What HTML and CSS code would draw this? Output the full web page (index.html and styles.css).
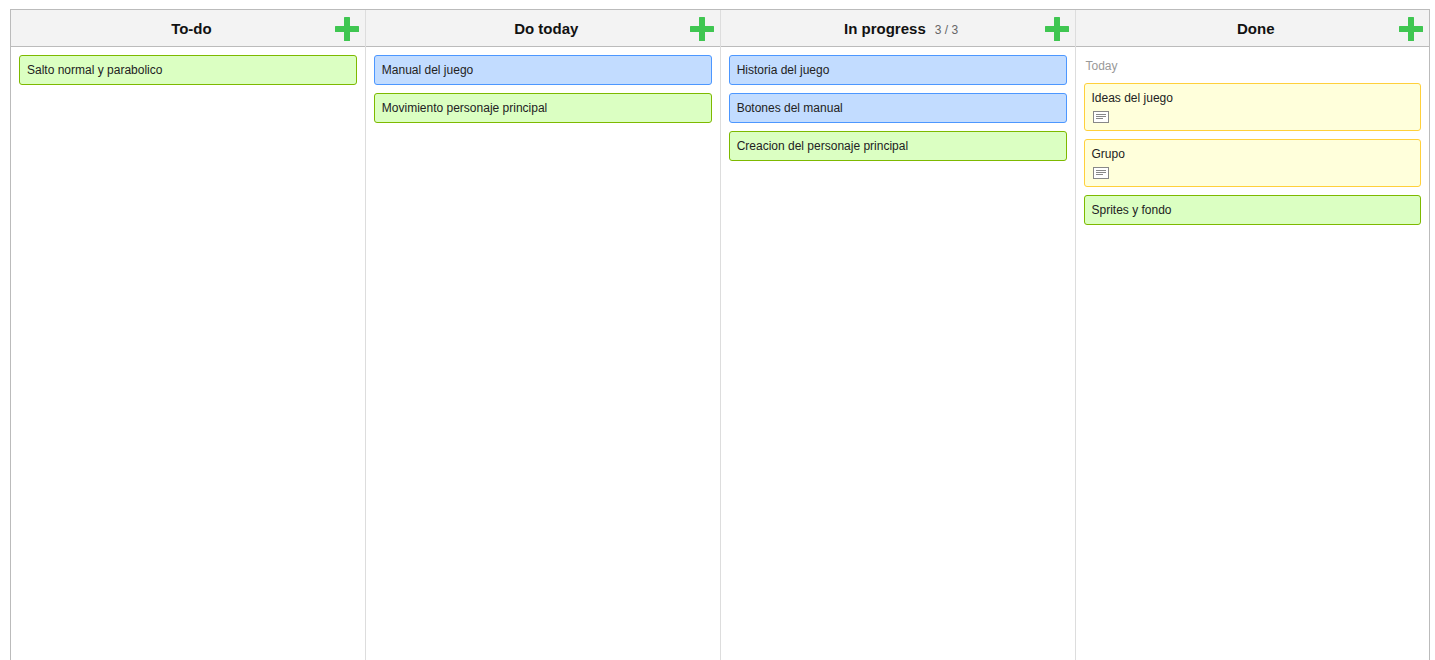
FILE: index.html
```html
<!DOCTYPE html>
<html lang="es">
<head>
<meta charset="utf-8">
<title>Board</title>
<link rel="stylesheet" href="styles.css">
</head>
<body>
<svg class="defs" aria-hidden="true">
  <symbol id="plus" viewBox="0 0 24 24"><rect x="9" y="0" width="6" height="24" rx="0.5"/><rect x="0" y="9" width="24" height="6" rx="0.5"/></symbol>
  <symbol id="note" viewBox="0 0 16 12"><rect x="0.5" y="0.5" width="15" height="11" fill="#fff" stroke="#888"/><path d="M3 3.5h10M3 5.5h10M3 7.5h7" stroke="#888" fill="none"/></symbol>
</svg>
<main class="board">
  <section class="column">
    <header class="column-header">
      <h2 class="title">To-do</h2>
      <button class="add" type="button" aria-label="Add task"><svg class="plus"><use href="#plus"/></svg></button>
    </header>
    <div class="cards">
      <article class="card green"><p class="name">Salto normal y parabolico</p></article>
    </div>
  </section>
  <section class="column">
    <header class="column-header">
      <h2 class="title">Do today</h2>
      <button class="add" type="button" aria-label="Add task"><svg class="plus"><use href="#plus"/></svg></button>
    </header>
    <div class="cards">
      <article class="card blue"><p class="name">Manual del juego</p></article>
      <article class="card green"><p class="name">Movimiento personaje principal</p></article>
    </div>
  </section>
  <section class="column">
    <header class="column-header">
      <h2 class="title">In progress<span class="count">3 / 3</span></h2>
      <button class="add" type="button" aria-label="Add task"><svg class="plus"><use href="#plus"/></svg></button>
    </header>
    <div class="cards">
      <article class="card blue"><p class="name">Historia del juego</p></article>
      <article class="card blue"><p class="name">Botones del manual</p></article>
      <article class="card green"><p class="name">Creacion del personaje principal</p></article>
    </div>
  </section>
  <section class="column">
    <header class="column-header">
      <h2 class="title">Done</h2>
      <button class="add" type="button" aria-label="Add task"><svg class="plus"><use href="#plus"/></svg></button>
    </header>
    <div class="cards">
      <h3 class="group">Today</h3>
      <article class="card yellow"><p class="name">Ideas del juego</p><svg class="note"><use href="#note"/></svg></article>
      <article class="card yellow"><p class="name">Grupo</p><svg class="note"><use href="#note"/></svg></article>
      <article class="card green"><p class="name">Sprites y fondo</p></article>
    </div>
  </section>
</main>
</body>
</html>
```

FILE: styles.css
```css
* {
  margin: 0;
}

body {
  display: flex;
  min-height: 100vh;
  box-sizing: border-box;
  padding: 9px 5px 0 10px;
  background: #fff;
  color: #222;
  font: 12px/16px "Liberation Sans", Arial, sans-serif;
}

.defs {
  position: absolute;
  width: 0;
  height: 0;
}

.board {
  display: grid;
  grid-template-columns: repeat(3, 1fr) calc(25% - 1px);
  flex: 1;
  border: 1px solid #bbb;
  border-bottom: 0;
}

.column {
  border-right: 1px solid #ddd;
}

.column:last-child {
  border-right: 0;
}

.column-header {
  display: flex;
  align-items: center;
  padding: 7px 6px 5px 37px;
  border-bottom: 1px solid #bbb;
  background: #f3f3f3;
}

.title {
  flex: 1;
  color: #111;
  font-size: 15px;
  line-height: 20px;
  text-align: center;
}

.count {
  margin-left: 9px;
  color: #666;
  font-size: 12px;
  font-weight: normal;
}

.add {
  padding: 0;
  border: 0;
  background: none;
  cursor: pointer;
}

.plus {
  display: block;
  width: 24px;
  height: 24px;
  fill: #3fc651;
}

.cards {
  display: flex;
  flex-direction: column;
  gap: 8px;
  padding: 8px;
}

.group {
  padding: 3px 2px 1px;
  color: #999;
  font-size: 12px;
  font-weight: normal;
}

.card {
  padding: 6px 7px;
  border: 1px solid;
  border-radius: 3px;
}

.green {
  border-color: #7db900;
  background: #dbffc2;
}

.blue {
  border-color: #4c97ff;
  background: #c2dcff;
}

.yellow {
  border-color: #ffd03b;
  background: #ffffdb;
}

.note {
  display: block;
  width: 16px;
  height: 12px;
  margin: 5px 1px 1px;
}
```
